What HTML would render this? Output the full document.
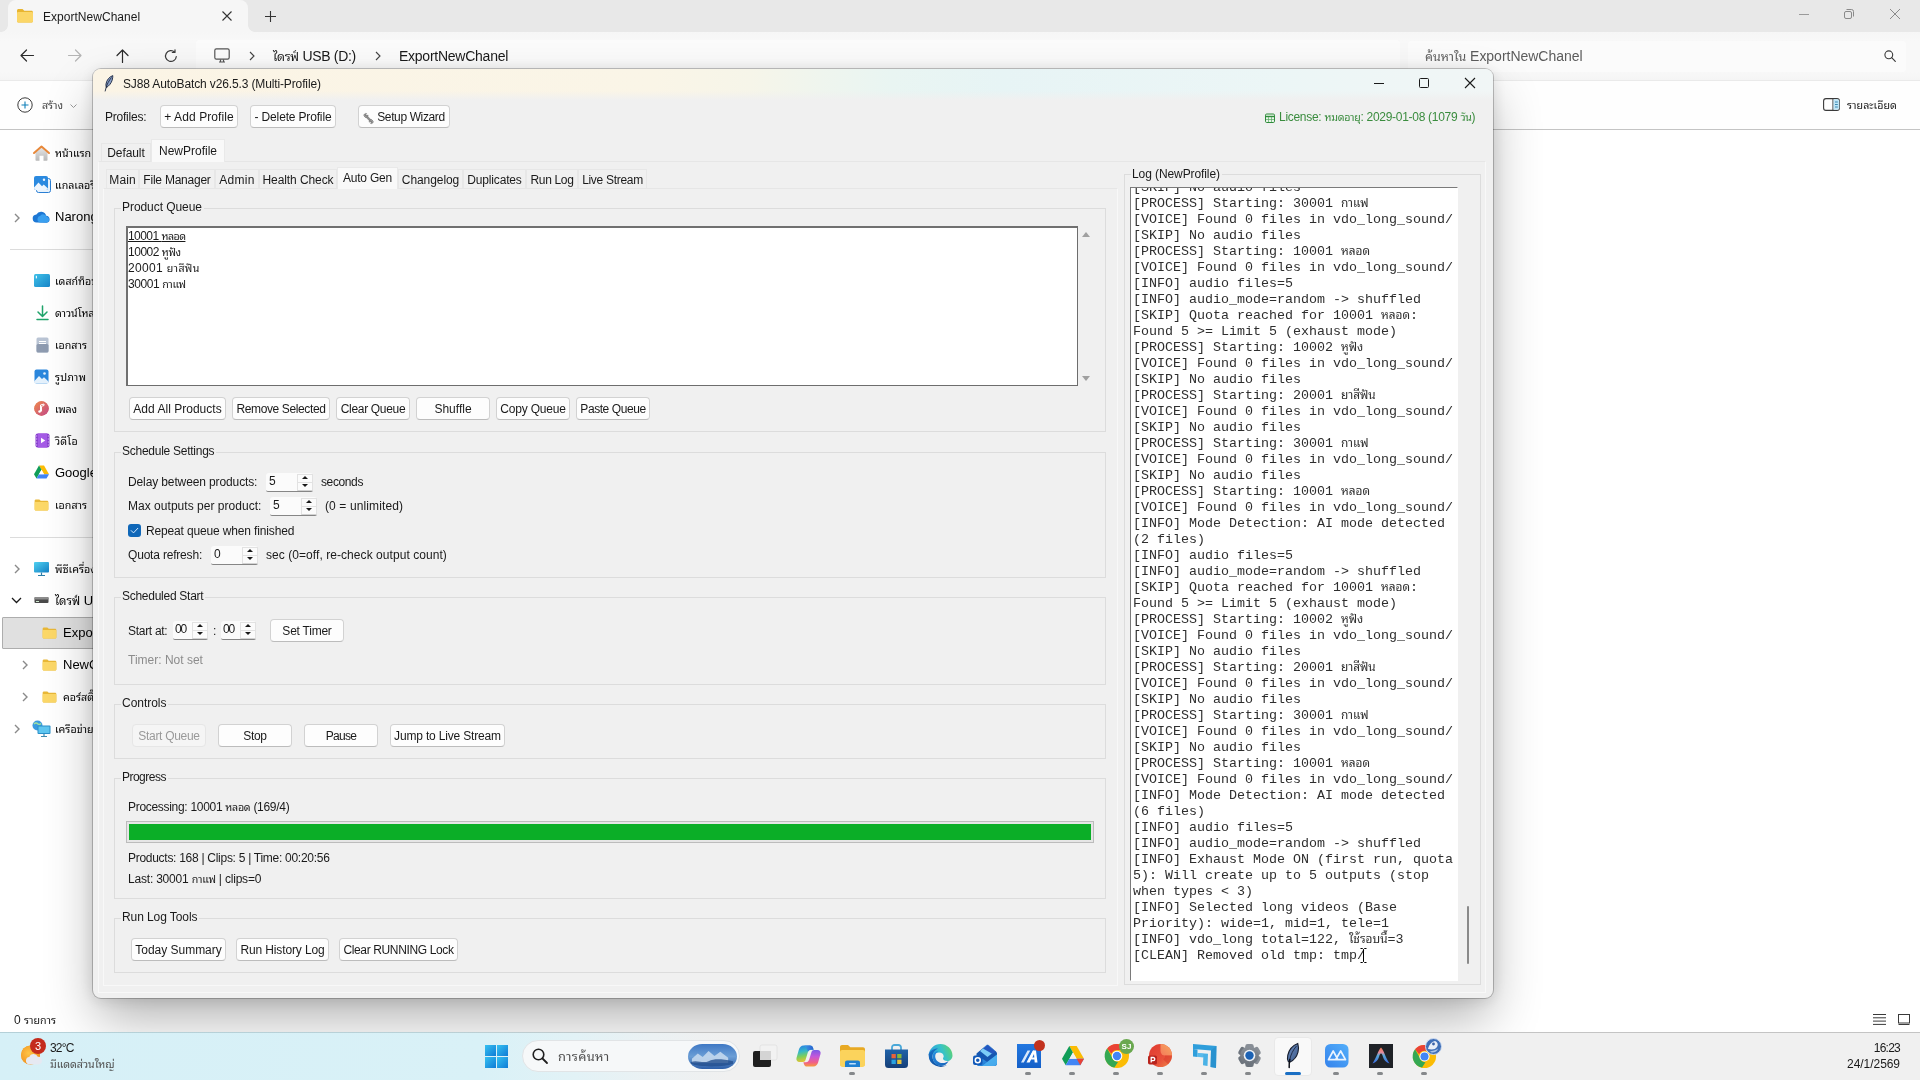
<!DOCTYPE html>
<html lang="th">
<head>
<meta charset="utf-8">
<title>ExportNewChanel</title>
<style>
*{box-sizing:border-box;margin:0;padding:0}
html,body{width:1920px;height:1080px;overflow:hidden;background:#fff}
body{position:relative;font-family:"Liberation Sans","Noto Sans Thai Looped","Loma","Noto Sans Thai",sans-serif;font-size:12px;color:#1a1a1a}
#root{position:absolute;left:0;top:0;width:1920px;height:1080px;overflow:hidden;will-change:transform}
.abs{position:absolute}
.t{position:absolute;white-space:nowrap;line-height:16px;height:16px}
svg{position:absolute;overflow:visible}
.th{font-size:.89em}
/* explorer */
#ex-title{position:absolute;left:0;top:0;width:1920px;height:32px;background:#e8e8e8}
#ex-tab{position:absolute;left:8px;top:0;width:240px;height:32px;background:#f6f6f6;border-radius:8px 8px 0 0}
#ex-tab:before{content:"";position:absolute;left:-7px;bottom:0;width:7px;height:7px;background:radial-gradient(circle at 0 0,rgba(246,246,246,0) 6.500px,#f6f6f6 7.200px)}
#ex-tab:after{content:"";position:absolute;right:-7px;bottom:0;width:7px;height:7px;background:radial-gradient(circle at 100% 0,rgba(246,246,246,0) 6.500px,#f6f6f6 7.200px)}
#ex-nav{position:absolute;left:0;top:32px;width:1920px;height:48px;background:linear-gradient(#f6f6f6 0,#f8f8f8 9px,#f8f8f8 40px,#f5f5f5 48px)}
#ex-addr{position:absolute;left:196px;top:40px;width:1204px;height:32px;background:#fbfbfb;border-radius:4px}
#ex-tool{position:absolute;left:0;top:80px;width:1920px;height:50px;background:#fefefe;border-top:1px solid #eaeaea;border-bottom:1px solid #c4c4c4}
#ex-search{position:absolute;left:1408px;top:41px;width:498px;height:31px;background:#fbfbfb;border-radius:4px}
.side{position:absolute;font-size:12px;line-height:16px;white-space:nowrap;color:#000}
/* app */
#app{position:absolute;left:93px;top:69px;width:1400px;height:929px;background:#f0f0f0;border-radius:8px;box-shadow:0 0 0 1px rgba(0,0,0,.22),0 24px 52px -4px rgba(0,0,0,.31),0 2px 16px rgba(0,0,0,.12);overflow:hidden}
#app .in{position:absolute;left:-93px;top:-68px;width:1920px;height:1080px}
#app-title{position:absolute;left:93px;top:69px;width:1400px;height:31px;background:linear-gradient(180deg,rgba(240,240,240,0) 0,rgba(240,240,240,0) 22px,rgba(240,240,240,.55) 27px,#f0f0f0 31px),linear-gradient(90deg,#fbf4e5 0%,#faf5e7 40%,#f6f5e9 47%,#eff5ee 52%,#e9f5f2 57%,#e7f4f5 65%,#ecf6f6 85%,#f1f6f6 100%)}
.btn{position:absolute;height:23px;background:#fdfdfd;border:1px solid #d2d2d2;border-bottom-color:#bcbcbc;border-radius:4px;text-align:center;line-height:22px;white-space:nowrap;font-size:12px;color:#1a1a1a}
.btn.dis{background:#f5f5f5;border-color:#e6e6e6;color:#9a9a9a}
.grp{position:absolute;border:1px solid #dcdcdc}
.grp>b{position:absolute;left:6px;top:-10px;font-weight:normal;background:#f0f0f0;padding:0 2px 0 1px;line-height:16px;height:16px;white-space:nowrap}
.tab{position:absolute;border:1px solid #e7e7e7;border-bottom:none;background:#f0f0f0;text-align:center;white-space:nowrap}
.tab.on{background:#f9f9f9;border-color:#e9e9e9}
.spin{position:absolute;height:19px;background:#fbfbfb;border-bottom:1px solid #868686;border-radius:3px 3px 2px 2px}
.spin i{position:absolute;left:3px;top:0;font-style:normal;line-height:17px}
.spin u{position:absolute;right:2px;top:1px;width:14px;height:16px;text-decoration:none}
.spin u:before{content:"";position:absolute;left:0;top:0;width:14px;height:7px;border:1px solid #e2e2e2;border-bottom-color:#d2d2d2}
.spin u:after{content:"";position:absolute;left:0;top:8px;width:14px;height:7px;border:1px solid #e2e2e2;border-bottom-color:#d2d2d2}
.spin s{position:absolute;right:5px;width:0;height:0;border:3px solid transparent}
.spin s.up{top:1px;border-top:none;border-bottom:3.500px solid #1a1a1a;top:3px}
.spin s.dn{border-bottom:none;border-top:3.500px solid #1a1a1a;top:11px}
#log{position:absolute;left:1130px;top:187px;width:328px;height:794px;background:#fff;border:1px solid #7a7a7a;border-right-color:#fff;border-bottom-color:#fff;overflow:hidden}
#log pre{position:absolute;left:2px;top:-8px;font-family:"Liberation Mono","Noto Sans Thai Looped","Loma","Noto Sans Thai",monospace;font-size:13.333px;line-height:16px;color:#2e2e2e;white-space:pre}
/* taskbar */
#tb{position:absolute;left:0;top:1032px;width:1920px;height:48px;background:linear-gradient(90deg,#d6f0f7 0%,#d9f1f7 25%,#e2f2f6 30%,#ebf1f3 34%,#f0f0f0 38%,#f0f0f0 100%);border-top:1px solid #c4c4c4}
#tbl{position:absolute;left:0;top:1032px;width:700px;height:1px;background:linear-gradient(90deg,#b4d0d8 0%,#b9d1d7 60%,#c4c4c4 100%)}
</style>
</head>
<body>
<div id="root">
<!-- ===== File Explorer window (background) ===== -->
<div id="explorer">
<div id="ex-title"></div>
<div id="ex-tab"></div>
<svg style="left:16px;top:8px" width="18" height="16" viewBox="0 0 18 16"><path d="M1 2.5c0-.8.7-1.5 1.500-1.500h4l1.800 1.800h7.200c.8 0 1.500.7 1.500 1.500v8.700c0 .8-.7 1.500-1.500 1.500h-13c-.8 0-1.500-.7-1.500-1.500z" fill="#e8b530"/><path d="M1 5.200c0-.7.600-1.200 1.300-1.200h13.400c.7 0 1.300.5 1.300 1.200v7.800c0 .8-.7 1.500-1.500 1.500h-13c-.8 0-1.500-.7-1.500-1.500z" fill="#fbd667"/></svg>
<div class="t" style="letter-spacing:0.03px;left:43px;top:9px;font-size:12px;color:#1a1a1a">ExportNewChanel</div>
<svg style="left:222px;top:11px" width="10" height="10" viewBox="0 0 10 10"><path d="M.5.5l9 9M9.500.5l-9 9" stroke="#333" stroke-width="1.100" fill="none"/></svg>
<svg style="left:265px;top:11px" width="11" height="11" viewBox="0 0 11 11"><path d="M5.500 0v11M0 5.500h11" stroke="#333" stroke-width="1.100" fill="none"/></svg>
<!-- window controls -->
<svg style="left:1799px;top:14px" width="10" height="1" viewBox="0 0 10 1"><path d="M0 .5h10" stroke="#9a9a9a" stroke-width="1"/></svg>
<svg style="left:1844px;top:9px" width="10" height="10" viewBox="0 0 10 10"><rect x=".5" y="2.500" width="7" height="7" rx="1.500" fill="none" stroke="#8a8a8a"/><path d="M2.500 .5h5a2 2 0 0 1 2 2v5" fill="none" stroke="#8a8a8a"/></svg>
<svg style="left:1890px;top:9px" width="10" height="10" viewBox="0 0 10 10"><path d="M0 0l10 10M10 0l-10 10" stroke="#8a8a8a" stroke-width="1" fill="none"/></svg>

<div id="ex-nav"></div>
<div id="ex-addr"></div>
<!-- nav arrows -->
<svg style="left:20px;top:49px" width="14" height="13" viewBox="0 0 14 13"><path d="M13.500 6.500h-12.500M6.500 1l-5.500 5.500l5.500 5.500" stroke="#2b2b2b" stroke-width="1.200" fill="none" stroke-linecap="round" stroke-linejoin="round"/></svg>
<svg style="left:68px;top:49px" width="14" height="13" viewBox="0 0 14 13"><path d="M.5 6.500h12.500M7.500 1l5.500 5.500l-5.500 5.500" stroke="#b4b4b4" stroke-width="1.200" fill="none" stroke-linecap="round" stroke-linejoin="round"/></svg>
<svg style="left:116px;top:49px" width="13" height="14" viewBox="0 0 13 14"><path d="M6.500 13.500v-12.500M1 6.500l5.500-5.500l5.500 5.500" stroke="#2b2b2b" stroke-width="1.200" fill="none" stroke-linecap="round" stroke-linejoin="round"/></svg>
<svg style="left:164px;top:49px" width="14" height="14" viewBox="0 0 14 14"><path d="M12.300 7.500a5.400 5.400 0 1 1-1.700-4.400M11 .8v2.700h-2.700" stroke="#3a3a3a" stroke-width="1.200" fill="none" stroke-linecap="round" stroke-linejoin="round"/></svg>
<svg style="left:214px;top:48px" width="16" height="15" viewBox="0 0 16 15"><rect x=".8" y=".8" width="14.400" height="10.400" rx="1.600" fill="none" stroke="#555" stroke-width="1.200"/><path d="M5 14h6M6.500 11.500v2.300M9.500 11.500v2.300" stroke="#555" stroke-width="1.200" fill="none"/></svg>
<svg style="left:249px;top:51px" width="6" height="10" viewBox="0 0 6 10"><path d="M1 1l4 4l-4 4" stroke="#444" stroke-width="1.100" fill="none"/></svg>
<div class="t" style="letter-spacing:-0.30px;left:273px;top:46px;font-size:14px;line-height:20px;height:20px;color:#1a1a1a"><span class="th">ไดรฟ์</span> USB (D:)</div>
<svg style="left:375px;top:51px" width="6" height="10" viewBox="0 0 6 10"><path d="M1 1l4 4l-4 4" stroke="#444" stroke-width="1.100" fill="none"/></svg>
<div class="t" style="letter-spacing:-0.25px;left:399px;top:46px;font-size:14px;line-height:20px;height:20px;color:#1a1a1a">ExportNewChanel</div>
<div id="ex-search"></div>
<div class="t" style="letter-spacing:-0.02px;left:1425px;top:46px;font-size:14px;line-height:20px;height:20px;color:#5c5c5c"><span class="th">ค้นหาใน</span> ExportNewChanel</div>
<svg style="left:1884px;top:50px" width="12" height="12" viewBox="0 0 12 12"><circle cx="4.800" cy="4.800" r="3.900" fill="none" stroke="#3a3a3a" stroke-width="1.100"/><path d="M7.700 7.700l3.600 3.600" stroke="#3a3a3a" stroke-width="1.200" stroke-linecap="round"/></svg>

<div id="ex-tool"></div>
<svg style="left:17px;top:97px" width="16" height="16" viewBox="0 0 16 16"><circle cx="8" cy="8" r="7.200" fill="none" stroke="#3c3c3c" stroke-width="1"/><path d="M8 4.500v7M4.500 8h7" stroke="#0f7fb8" stroke-width="1.100"/></svg>
<div class="t" style="letter-spacing:-0.05px;left:42px;top:97px;font-size:12px;color:#4a4a4a"><span class="th">สร้าง</span></div>
<svg style="left:70px;top:104px" width="7" height="4" viewBox="0 0 7 4"><path d="M.5.5l3 3l3-3" stroke="#9a9a9a" stroke-width="1" fill="none"/></svg>
<svg style="left:1823px;top:98px" width="17" height="13" viewBox="0 0 17 13"><rect x=".6" y=".6" width="15.800" height="11.800" rx="2.400" fill="none" stroke="#3a3a3a" stroke-width="1.100"/><path d="M10 .6v11.800" stroke="#3a3a3a" stroke-width="1.100"/><path d="M10.500 1.200h4a1.800 1.800 0 0 1 1.800 1.800v7a1.800 1.800 0 0 1-1.800 1.800h-4z" fill="#bfe6f7"/><path d="M12 4h2.800M12 6.500h2.800M12 9h2.800" stroke="#2a7ea8" stroke-width=".9"/></svg>
<div class="t" style="letter-spacing:0.04px;left:1847px;top:97px;font-size:12px;color:#1a1a1a"><span class="th">รายละเอียด</span></div>

<!-- sidebar -->
<div class="abs" style="left:10px;top:249px;width:90px;height:1px;background:#dcdcdc"></div>
<div class="abs" style="left:10px;top:537px;width:90px;height:1px;background:#dcdcdc"></div>
<div class="abs" style="left:2px;top:617px;width:100px;height:32px;background:#e0e0e0;border:1px solid #adadad;border-radius:1px"></div>

<!-- home -->
<svg style="left:33px;top:145px" width="17" height="16" viewBox="0 0 17 16"><defs><linearGradient id="hb" x1="0" y1="0" x2="0" y2="1"><stop offset="0" stop-color="#e6e6e6"/><stop offset="1" stop-color="#b8b8b8"/></linearGradient></defs><path d="M2.500 7.500l6-5l6 5v7.500a.8.800 0 0 1-.8.800h-3.200v-5h-4v5h-3.200a.8.800 0 0 1-.8-.8z" fill="url(#hb)"/><path d="M1 8l7.500-6.500l7.500 6.500" stroke="#e8883a" stroke-width="2" fill="none" stroke-linecap="round" stroke-linejoin="round"/></svg>
<div class="side" style="letter-spacing:-0.05px;left:55px;top:145px"><span class="th">หน้าแรก</span></div>
<!-- gallery -->
<svg style="left:34px;top:176px" width="17" height="17" viewBox="0 0 17 17"><rect x="2.500" y="2.500" width="14" height="14" rx="2" fill="#e8f3fd" stroke="#2a7fd4" stroke-width="1"/><rect x="0" y="0" width="14" height="14" rx="2" fill="#2b8ae0"/><path d="M0 11.500l4.500-5l3.500 3.700l1.700-1.600l4.300 4v0a2 2 0 0 1-2 1.400h-10a2 2 0 0 1-2-2z" fill="#eef6fe"/><circle cx="10" cy="3.800" r="1.200" fill="#eef6fe"/></svg>
<div class="side" style="left:55px;top:177px"><span class="th">แกลเลอรี</span></div>
<!-- onedrive -->
<svg style="left:14px;top:213px" width="6" height="10" viewBox="0 0 6 10"><path d="M1 1l4 4l-4 4" stroke="#8a8a8a" stroke-width="1.400" fill="none"/></svg>
<svg style="left:32px;top:210px" width="19" height="13" viewBox="0 0 19 13"><path d="M5 12.500a4 4 0 0 1-.6-8a5.300 5.300 0 0 1 9.800 1.200a3.600 3.600 0 0 1 .6 7.100z" fill="#1d77d4"/><path d="M8 12.500a3.500 3.500 0 0 1 .3-6.800a4 4 0 0 1 6.600 1a3 3 0 0 1 .1 5.800z" fill="#3aa0f0"/></svg>
<div class="side" style="left:55px;top:209px;font-size:13px">Narong</div>
<!-- desktop -->
<svg style="left:34px;top:274px" width="16" height="13" viewBox="0 0 16 13"><defs><linearGradient id="dk" x1="0" y1="0" x2="1" y2="1"><stop offset="0" stop-color="#3fc0e8"/><stop offset="1" stop-color="#1786c9"/></linearGradient></defs><rect x="0" y="0" width="16" height="13" rx="1.500" fill="url(#dk)"/><rect x="1.800" y="1.800" width="1.200" height="2.600" fill="#e8f8ff"/></svg>
<div class="side" style="left:55px;top:273px"><span class="th">เดสก์ท็อป</span></div>
<!-- download -->
<svg style="left:35px;top:305px" width="15" height="16" viewBox="0 0 15 16"><path d="M7.500 1v10M3 7l4.500 4.500l4.500-4.500M2 14.500h11" stroke="#1fa36a" stroke-width="1.500" fill="none" stroke-linecap="round" stroke-linejoin="round"/></svg>
<div class="side" style="left:55px;top:305px"><span class="th">ดาวน์โหลด</span></div>
<!-- documents -->
<svg style="left:36px;top:337px" width="13" height="16" viewBox="0 0 13 16"><rect x=".5" y=".5" width="12" height="15" rx="1.500" fill="#b9c4d4"/><rect x=".5" y="7" width="12" height="8.500" rx="1.500" fill="#8e9bb0"/><path d="M3 4.500h7M3 6.500h7" stroke="#fff" stroke-width="1"/></svg>
<div class="side" style="letter-spacing:-0.01px;left:55px;top:337px"><span class="th">เอกสาร</span></div>
<!-- pictures -->
<svg style="left:34px;top:369px" width="15" height="15" viewBox="0 0 15 15"><rect x=".5" y=".5" width="14" height="14" rx="2" fill="#2a86dc"/><path d="M.5 12l4.500-5l3 3l2-1.800l4.500 4.300v0a2 2 0 0 1-2 2h-10.500a2 2 0 0 1-2-2z" fill="#e4f1fc"/><circle cx="10.500" cy="4.500" r="1.300" fill="#e4f1fc"/></svg>
<div class="side" style="letter-spacing:0.10px;left:55px;top:369px"><span class="th">รูปภาพ</span></div>
<!-- music -->
<svg style="left:34px;top:401px" width="15" height="15" viewBox="0 0 15 15"><circle cx="7.500" cy="7.500" r="7.200" fill="#d9674f"/><circle cx="7.500" cy="7.500" r="7.200" fill="url(#mg)"/><path d="M6.500 10.500v-6.500l3.500-1v1.500l-2.500.8v5.200" stroke="#fff" stroke-width="1" fill="none"/><circle cx="5.600" cy="10.500" r="1.300" fill="#fff"/><defs><linearGradient id="mg" x1="0" y1="0" x2="1" y2="1"><stop offset="0" stop-color="#f08a4a"/><stop offset="1" stop-color="#c2478a"/></linearGradient></defs></svg>
<div class="side" style="letter-spacing:-0.18px;left:55px;top:401px"><span class="th">เพลง</span></div>
<!-- video -->
<svg style="left:35px;top:433px" width="15" height="15" viewBox="0 0 15 15"><rect x=".5" y=".5" width="14" height="14" rx="2" fill="#8a3fd0"/><rect x="3" y=".5" width="9" height="14" fill="#a55be6"/><path d="M6 4.800v5.400l4.300-2.700z" fill="#fff"/><path d="M1.200 3h1M1.200 6h1M1.200 9h1M1.200 12h1M12.800 3h1M12.800 6h1M12.800 9h1M12.800 12h1" stroke="#e9d6fb" stroke-width="1"/></svg>
<div class="side" style="letter-spacing:0.17px;left:55px;top:433px"><span class="th">วิดีโอ</span></div>
<!-- google drive -->
<svg style="left:34px;top:465px" width="15" height="14" viewBox="0 0 15 14"><path d="M5 .5h5l5 8.700h-5z" fill="#fbbc04"/><path d="M5 .5l-5 8.700l2.500 4.300l5-8.700z" fill="#0f9d58"/><path d="M2.500 13.500l2.500-4.300h10l-2.500 4.300z" fill="#4285f4"/><path d="M5 9.200l2.500-4.400l2.500 4.400z" fill="#fff"/></svg>
<div class="side" style="left:55px;top:465px;font-size:13px">Google</div>
<!-- folder -->
<svg style="left:34px;top:499px" width="15" height="12" viewBox="0 0 17 14"><path d="M.5 2c0-.8.700-1.500 1.500-1.500h4l1.600 1.600h7.400c.8 0 1.500.7 1.500 1.500v8.400c0 .8-.7 1.500-1.500 1.500h-13c-.8 0-1.500-.7-1.500-1.500z" fill="#e9b837"/><path d="M.5 4.700c0-.7.600-1.200 1.300-1.200h13.400c.7 0 1.300.5 1.300 1.200v7.300c0 .8-.7 1.500-1.500 1.500h-13c-.8 0-1.500-.7-1.500-1.500z" fill="#fcd868"/></svg>
<div class="side" style="left:55px;top:497px"><span class="th">เอกสาร</span></div>
<!-- this PC -->
<svg style="left:14px;top:564px" width="6" height="10" viewBox="0 0 6 10"><path d="M1 1l4 4l-4 4" stroke="#8a8a8a" stroke-width="1.400" fill="none"/></svg>
<svg style="left:34px;top:562px" width="15" height="14" viewBox="0 0 15 14"><defs><linearGradient id="pcg" x1="0" y1="0" x2="1" y2="1"><stop offset="0" stop-color="#4fd0f0"/><stop offset="1" stop-color="#1480c4"/></linearGradient></defs><rect x="0" y="0" width="15" height="10.500" rx="1" fill="url(#pcg)"/><path d="M7.500 10.500v2.500M4 13.500h7" stroke="#2d7ea8" stroke-width="1.200"/></svg>
<div class="side" style="left:55px;top:561px"><span class="th">พีซีเครื่องนี้</span></div>
<!-- USB drive -->
<svg style="left:11px;top:597px" width="11" height="7" viewBox="0 0 11 7"><path d="M1 1l4.500 4.500l4.500-4.500" stroke="#1a1a1a" stroke-width="1.300" fill="none"/></svg>
<svg style="left:34px;top:596px" width="15" height="8" viewBox="0 0 15 8"><rect x=".5" y="1" width="14" height="6" rx="1" fill="#4a4a4a"/><rect x=".5" y="1" width="14" height="2.500" rx="1" fill="#8c8c8c"/><rect x="2" y="5" width="3" height="1" fill="#cfe9cf"/></svg>
<div class="side" style="left:55px;top:593px;font-size:13px"><span class="th">ไดรฟ์</span> USB (D:)</div>
<!-- Export (selected) -->
<svg style="left:42px;top:627px" width="15" height="12" viewBox="0 0 17 14"><path d="M.5 2c0-.8.700-1.500 1.500-1.500h4l1.600 1.600h7.400c.8 0 1.500.7 1.500 1.500v8.400c0 .8-.7 1.500-1.500 1.500h-13c-.8 0-1.500-.7-1.500-1.500z" fill="#e9b837"/><path d="M.5 4.700c0-.7.600-1.200 1.300-1.200h13.400c.7 0 1.300.5 1.300 1.200v7.300c0 .8-.7 1.500-1.500 1.500h-13c-.8 0-1.500-.7-1.500-1.500z" fill="#fcd868"/></svg>
<div class="side" style="left:63px;top:625px;font-size:13px">ExportNewChanel</div>
<!-- NewC -->
<svg style="left:22px;top:660px" width="6" height="10" viewBox="0 0 6 10"><path d="M1 1l4 4l-4 4" stroke="#8a8a8a" stroke-width="1.400" fill="none"/></svg>
<svg style="left:42px;top:659px" width="15" height="12" viewBox="0 0 17 14"><path d="M.5 2c0-.8.700-1.500 1.500-1.500h4l1.600 1.600h7.400c.8 0 1.500.7 1.500 1.500v8.400c0 .8-.7 1.500-1.500 1.500h-13c-.8 0-1.500-.7-1.500-1.500z" fill="#e9b837"/><path d="M.5 4.700c0-.7.600-1.200 1.300-1.200h13.400c.7 0 1.300.5 1.300 1.200v7.300c0 .8-.7 1.500-1.500 1.500h-13c-.8 0-1.500-.7-1.500-1.500z" fill="#fcd868"/></svg>
<div class="side" style="left:63px;top:657px;font-size:13px">NewChanel</div>
<!-- course -->
<svg style="left:22px;top:692px" width="6" height="10" viewBox="0 0 6 10"><path d="M1 1l4 4l-4 4" stroke="#8a8a8a" stroke-width="1.400" fill="none"/></svg>
<svg style="left:42px;top:691px" width="15" height="12" viewBox="0 0 17 14"><path d="M.5 2c0-.8.700-1.500 1.500-1.500h4l1.600 1.600h7.400c.8 0 1.500.7 1.500 1.500v8.400c0 .8-.7 1.500-1.500 1.500h-13c-.8 0-1.500-.7-1.500-1.500z" fill="#e9b837"/><path d="M.5 4.700c0-.7.600-1.200 1.300-1.200h13.400c.7 0 1.300.5 1.300 1.200v7.300c0 .8-.7 1.500-1.500 1.500h-13c-.8 0-1.500-.7-1.500-1.500z" fill="#fcd868"/></svg>
<div class="side" style="left:63px;top:689px"><span class="th">คอร์สติ๊กต็อก</span></div>
<!-- network -->
<svg style="left:14px;top:724px" width="6" height="10" viewBox="0 0 6 10"><path d="M1 1l4 4l-4 4" stroke="#8a8a8a" stroke-width="1.400" fill="none"/></svg>
<svg style="left:32px;top:720px" width="19" height="17" viewBox="0 0 19 17"><circle cx="5.500" cy="5.500" r="5" fill="#3b9be0"/><path d="M2 4c1.500-1.500 3-1 4 0s2 .5 3-.5" stroke="#9fe0a0" stroke-width="1.500" fill="none"/><rect x="5.500" y="5.500" width="13" height="8.500" rx="1" fill="#2a8fc9"/><rect x="6.500" y="6.500" width="11" height="6.500" fill="#5ec6f0"/><path d="M9 16.500h6M12 14v2.500" stroke="#3f8ab0" stroke-width="1.200"/></svg>
<div class="side" style="left:55px;top:721px"><span class="th">เครือข่าย</span></div>

<!-- status bar -->
<div class="t" style="letter-spacing:-0.01px;left:14px;top:1012px;font-size:12px;color:#1a1a1a">0 <span class="th">รายการ</span></div>
<svg style="left:1873px;top:1014px" width="13" height="11" viewBox="0 0 13 11"><path d="M0 .5h13M0 3.800h13M0 7.100h13M0 10.400h13" stroke="#3a3a3a" stroke-width="1"/></svg>
<svg style="left:1898px;top:1014px" width="12" height="11" viewBox="0 0 12 11"><rect x=".5" y=".5" width="11" height="8.500" fill="none" stroke="#3a3a3a" stroke-width="1"/><path d="M.5 10.500h11" stroke="#3a3a3a" stroke-width="1"/></svg>
</div>
<!-- ===== SJ88 AutoBatch window ===== -->
<div id="app"></div>
<div id="appc">
<div id="app-title" style="border-radius:8px 8px 0 0"></div>
<svg style="left:103px;top:75px" width="11" height="17" viewBox="0 0 11 17"><path d="M9.800 .6c-3.500 1.200-6.300 4.600-6.800 8.400c-.2 1.500.1 2.900.4 3.600c2.200-1.500 4.800-4 5.800-7.500c.4-1.600.7-3.300.6-4.500z" fill="#8aa0c8" stroke="#1c2740" stroke-width=".9"/><path d="M8.500 2.500c-2.500 3-4.500 6.500-5.500 10.500l-.9 3.400" stroke="#1c2740" stroke-width=".9" fill="none"/></svg>
<div class="t" style="letter-spacing:-0.13px;left:123px;top:76px;font-size:12px;color:#1a1a1a">SJ88 AutoBatch v26.5.3 (Multi-Profile)</div>
<svg style="left:1374px;top:83px" width="10" height="1" viewBox="0 0 10 1"><path d="M0 .5h10" stroke="#1a1a1a" stroke-width="1"/></svg>
<svg style="left:1419px;top:78px" width="10" height="10" viewBox="0 0 10 10"><rect x=".5" y=".5" width="9" height="9" rx="1" fill="none" stroke="#1a1a1a" stroke-width="1"/></svg>
<svg style="left:1465px;top:78px" width="10" height="10" viewBox="0 0 10 10"><path d="M0 0l10 10M10 0l-10 10" stroke="#1a1a1a" stroke-width="1.100" fill="none"/></svg>

<!-- profiles row -->
<div class="t" style="letter-spacing:-0.23px;left:105px;top:109px">Profiles:</div>
<div class="btn" style="letter-spacing:0.08px;left:160px;top:105px;width:78px">+ Add Profile</div>
<div class="btn" style="letter-spacing:-0.16px;left:250px;top:105px;width:86px">- Delete Profile</div>
<div class="btn" style="letter-spacing:-0.38px;left:358px;top:105px;width:92px;padding-left:14px">Setup Wizard</div>
<svg style="left:363px;top:113px" width="11" height="11" viewBox="0 0 11 11"><path d="M2.200 2.200l6.600 6.600" stroke="#8d8d8d" stroke-width="2.400" stroke-linecap="round"/><path d="M.9 2.800a2.100 2.100 0 0 1 2.700-2.300l-1.300 1.300l.3 1.100l1.100.3l1.300-1.300a2.100 2.100 0 0 1-2.700 2.500z" fill="#a5a5a5" stroke="#6f6f6f" stroke-width=".6"/><path d="M10.200 8.300a2 2 0 0 1-2.600 2.200l1.200-1.200l-.3-1l-1-.3l-1.200 1.200a2 2 0 0 1 2.500-2.500z" fill="#a5a5a5" stroke="#6f6f6f" stroke-width=".6"/></svg>
<svg style="left:1265px;top:113px" width="10" height="10" viewBox="0 0 10 10"><rect x=".5" y="1" width="9" height="8.500" rx="1.200" fill="#e8f5e8" stroke="#2e8b3a" stroke-width="1"/><path d="M.5 3.500h9" stroke="#2e8b3a" stroke-width="1.400"/><path d="M3.500 4v5M6.500 4v5M1 6.500h8" stroke="#5aa865" stroke-width=".7"/></svg>
<div class="t" style="letter-spacing:-0.29px;left:1279px;top:109px;color:#3a8c3e">License: <span class="th">หมดอายุ</span>: 2029-01-08 (1079 <span class="th">วัน</span>)</div>

<!-- outer notebook -->
<div class="abs" style="left:98px;top:161px;width:1388px;height:832px;border:1px solid #f8f8f8;border-top-color:#e6e6e6;background:#f0f0f0"></div>
<div class="tab" style="letter-spacing:-0.09px;left:101px;top:143px;width:50px;height:18px;line-height:18px;padding-top:0">Default</div>
<div class="tab on" style="letter-spacing:-0.00px;left:151px;top:139px;width:74px;height:23px;line-height:20px;padding-top:1px">NewProfile</div>

<!-- inner notebook -->
<div class="abs" style="left:103px;top:188px;width:1015px;height:798px;border:1px solid #f8f8f8;border-top-color:#e6e6e6;background:#f0f0f0"></div>
<div class="tab" style="letter-spacing:0.09px;left:106px;top:169px;width:33px;height:19px;line-height:20px">Main</div>
<div class="tab" style="letter-spacing:-0.23px;left:139px;top:169px;width:76px;height:19px;line-height:20px">File Manager</div>
<div class="tab" style="letter-spacing:0.32px;left:215px;top:169px;width:44px;height:19px;line-height:20px">Admin</div>
<div class="tab" style="letter-spacing:-0.08px;left:259px;top:169px;width:78px;height:19px;line-height:20px">Health Check</div>
<div class="tab on" style="letter-spacing:-0.21px;left:337px;top:167px;width:61px;height:22px;line-height:20px">Auto Gen</div>
<div class="tab" style="letter-spacing:-0.07px;left:398px;top:169px;width:65px;height:19px;line-height:20px">Changelog</div>
<div class="tab" style="letter-spacing:-0.17px;left:463px;top:169px;width:63px;height:19px;line-height:20px">Duplicates</div>
<div class="tab" style="letter-spacing:-0.35px;left:526px;top:169px;width:52px;height:19px;line-height:20px">Run Log</div>
<div class="tab" style="letter-spacing:-0.30px;left:578px;top:169px;width:69px;height:19px;line-height:20px">Live Stream</div>

<!-- Product Queue -->
<div class="grp" style="left:114px;top:208px;width:992px;height:224px"><b style="letter-spacing:-0.06px">Product Queue</b></div>
<div class="abs" style="left:126px;top:226px;width:952px;height:160px;background:#fff;border:1px solid #6d6d6d;border-top-width:2px;border-left-width:2px;border-top-color:#707070;border-left-color:#707070"></div>
<div class="t" style="letter-spacing:-0.55px;left:128px;top:228px;text-decoration:underline">10001 <span class="th">หลอด</span></div>
<div class="t" style="letter-spacing:-0.48px;left:128px;top:244px">10002 <span class="th">หูฟัง</span></div>
<div class="t" style="letter-spacing:0.33px;left:128px;top:260px">20001 <span class="th">ยาสีฟัน</span></div>
<div class="t" style="letter-spacing:-0.40px;left:128px;top:276px">30001 <span class="th">กาแฟ</span></div>
<svg style="left:1082px;top:232px" width="8" height="5" viewBox="0 0 8 5"><path d="M0 5l4-5l4 5z" fill="#a0a0a0"/></svg>
<svg style="left:1082px;top:376px" width="8" height="5" viewBox="0 0 8 5"><path d="M0 0l4 5l4-5z" fill="#a0a0a0"/></svg>
<div class="btn" style="letter-spacing:0.02px;left:129px;top:397px;width:97px">Add All Products</div>
<div class="btn" style="letter-spacing:-0.37px;left:232px;top:397px;width:98px">Remove Selected</div>
<div class="btn" style="letter-spacing:-0.32px;left:336px;top:397px;width:74px">Clear Queue</div>
<div class="btn" style="letter-spacing:0.01px;left:416px;top:397px;width:74px">Shuffle</div>
<div class="btn" style="letter-spacing:-0.18px;left:496px;top:397px;width:74px">Copy Queue</div>
<div class="btn" style="letter-spacing:-0.43px;left:576px;top:397px;width:74px">Paste Queue</div>

<!-- Schedule Settings -->
<div class="grp" style="left:114px;top:452px;width:992px;height:126px"><b style="letter-spacing:-0.26px">Schedule Settings</b></div>
<div class="t" style="letter-spacing:-0.12px;left:128px;top:474px">Delay between products:</div>
<div class="spin" style="left:266px;top:473px;width:47px"><i>5</i><u></u><s class="up"></s><s class="dn"></s></div>
<div class="t" style="letter-spacing:-0.38px;left:321px;top:474px">seconds</div>
<div class="t" style="letter-spacing:0.03px;left:128px;top:498px">Max outputs per product:</div>
<div class="spin" style="left:270px;top:497px;width:47px"><i>5</i><u></u><s class="up"></s><s class="dn"></s></div>
<div class="t" style="letter-spacing:0.12px;left:325px;top:498px">(0 = unlimited)</div>
<div class="abs" style="left:128px;top:524px;width:13px;height:13px;background:#0f67b8;border-radius:3px"></div>
<svg style="left:130px;top:527px" width="9" height="7" viewBox="0 0 9 7"><path d="M1.200 3.600l2.300 2.300l4.300-4.600" stroke="#d6eaff" stroke-width="1" fill="none" stroke-linecap="round" stroke-linejoin="round"/></svg>
<div class="t" style="letter-spacing:-0.15px;left:146px;top:523px">Repeat queue when finished</div>
<div class="t" style="letter-spacing:-0.19px;left:128px;top:547px">Quota refresh:</div>
<div class="spin" style="left:211px;top:546px;width:47px"><i>0</i><u></u><s class="up"></s><s class="dn"></s></div>
<div class="t" style="letter-spacing:0.06px;left:266px;top:547px">sec (0=off, re-check output count)</div>

<!-- Scheduled Start -->
<div class="grp" style="left:114px;top:597px;width:992px;height:88px"><b style="letter-spacing:-0.27px">Scheduled Start</b></div>
<div class="t" style="letter-spacing:-0.29px;left:128px;top:623px">Start at:</div>
<div class="spin" style="left:173px;top:621px;width:35px"><i style="letter-spacing:-1.20px;left:2px">00</i><u></u><s class="up"></s><s class="dn"></s></div>
<div class="t" style="left:213px;top:623px">:</div>
<div class="spin" style="left:221px;top:621px;width:35px"><i style="letter-spacing:-1.20px;left:2px">00</i><u></u><s class="up"></s><s class="dn"></s></div>
<div class="btn" style="letter-spacing:-0.23px;left:270px;top:619px;width:74px">Set Timer</div>
<div class="t" style="letter-spacing:-0.00px;left:128px;top:652px;color:#8c8c8c">Timer: Not set</div>

<!-- Controls -->
<div class="grp" style="left:114px;top:704px;width:992px;height:55px"><b style="letter-spacing:-0.04px">Controls</b></div>
<div class="btn dis" style="letter-spacing:-0.31px;left:132px;top:724px;width:74px">Start Queue</div>
<div class="btn" style="letter-spacing:-0.33px;left:218px;top:724px;width:74px">Stop</div>
<div class="btn" style="letter-spacing:-0.73px;left:304px;top:724px;width:74px">Pause</div>
<div class="btn" style="letter-spacing:-0.17px;left:390px;top:724px;width:115px">Jump to Live Stream</div>

<!-- Progress -->
<div class="grp" style="left:114px;top:778px;width:992px;height:121px"><b style="letter-spacing:-0.52px">Progress</b></div>
<div class="t" style="letter-spacing:-0.30px;left:128px;top:799px">Processing: 10001 <span class="th">หลอด</span> (169/4)</div>
<div class="abs" style="left:126px;top:821px;width:968px;height:22px;background:#e6e6e6;border:1px solid #bcbcbc"></div>
<div class="abs" style="left:129px;top:824px;width:962px;height:16px;background:#0bae27"></div>
<div class="t" style="letter-spacing:-0.28px;left:128px;top:850px">Products: 168 | Clips: 5 | Time: 00:20:56</div>
<div class="t" style="letter-spacing:-0.20px;left:128px;top:871px">Last: 30001 <span class="th">กาแฟ</span> | clips=0</div>

<!-- Run Log Tools -->
<div class="grp" style="left:114px;top:918px;width:992px;height:55px"><b style="letter-spacing:-0.08px">Run Log Tools</b></div>
<div class="btn" style="letter-spacing:-0.02px;left:131px;top:938px;width:95px">Today Summary</div>
<div class="btn" style="letter-spacing:-0.12px;left:236px;top:938px;width:93px">Run History Log</div>
<div class="btn" style="letter-spacing:-0.36px;left:339px;top:938px;width:119px">Clear RUNNING Lock</div>

<!-- Log panel -->
<div class="grp" style="left:1124px;top:174px;width:357px;height:811px"><b style="letter-spacing:-0.09px;top:-9px">Log (NewProfile)</b></div>
<div id="log"><pre>[SKIP] No audio files
[PROCESS] Starting: 30001 <span class="th">กาแฟ</span>
[VOICE] Found 0 files in vdo_long_sound/
[SKIP] No audio files
[PROCESS] Starting: 10001 <span class="th">หลอด</span>
[VOICE] Found 0 files in vdo_long_sound/
[INFO] audio files=5
[INFO] audio_mode=random -&gt; shuffled
[SKIP] Quota reached for 10001 <span class="th">หลอด</span>:
Found 5 &gt;= Limit 5 (exhaust mode)
[PROCESS] Starting: 10002 <span class="th">หูฟัง</span>
[VOICE] Found 0 files in vdo_long_sound/
[SKIP] No audio files
[PROCESS] Starting: 20001 <span class="th">ยาสีฟัน</span>
[VOICE] Found 0 files in vdo_long_sound/
[SKIP] No audio files
[PROCESS] Starting: 30001 <span class="th">กาแฟ</span>
[VOICE] Found 0 files in vdo_long_sound/
[SKIP] No audio files
[PROCESS] Starting: 10001 <span class="th">หลอด</span>
[VOICE] Found 0 files in vdo_long_sound/
[INFO] Mode Detection: AI mode detected
(2 files)
[INFO] audio files=5
[INFO] audio_mode=random -&gt; shuffled
[SKIP] Quota reached for 10001 <span class="th">หลอด</span>:
Found 5 &gt;= Limit 5 (exhaust mode)
[PROCESS] Starting: 10002 <span class="th">หูฟัง</span>
[VOICE] Found 0 files in vdo_long_sound/
[SKIP] No audio files
[PROCESS] Starting: 20001 <span class="th">ยาสีฟัน</span>
[VOICE] Found 0 files in vdo_long_sound/
[SKIP] No audio files
[PROCESS] Starting: 30001 <span class="th">กาแฟ</span>
[VOICE] Found 0 files in vdo_long_sound/
[SKIP] No audio files
[PROCESS] Starting: 10001 <span class="th">หลอด</span>
[VOICE] Found 0 files in vdo_long_sound/
[INFO] Mode Detection: AI mode detected
(6 files)
[INFO] audio files=5
[INFO] audio_mode=random -&gt; shuffled
[INFO] Exhaust Mode ON (first run, quota
5): Will create up to 5 outputs (stop
when types &lt; 3)
[INFO] Selected long videos (Base
Priority): wide=1, mid=1, tele=1
[INFO] vdo_long total=122, <span class="th">ใช้รอบนี้</span>=3
[CLEAN] Removed old tmp: tmp/</pre></div>
<div class="abs" style="left:1467px;top:906px;width:2px;height:58px;background:#8a8a8a;border-radius:1px"></div>
<!-- I-beam cursor -->
<svg style="left:1360px;top:948px" width="7" height="15" viewBox="0 0 7 15"><path d="M.5.5h2l1 1l1-1h2M3.500 1.500v12M.5 14.500h2l1-1l1 1h2" stroke="#000" stroke-width="1" fill="none"/></svg>
</div>
<!-- ===== Taskbar ===== -->
<div id="tb"></div><div id="tbl"></div>
<div id="tbc">
<!-- weather -->
<svg style="left:20px;top:1040px" width="26" height="26" viewBox="0 0 26 26"><circle cx="10.500" cy="15" r="9.500" fill="#f5a623"/><circle cx="10.500" cy="15" r="9.500" fill="url(#sg)"/><path d="M9 24.500a3.800 3.800 0 0 1 .3-7.500a4.600 4.600 0 0 1 8.500-.3a3.900 3.900 0 0 1 .5 7.800z" fill="#e6e9f2"/><defs><radialGradient id="sg" cx=".4" cy=".4" r=".7"><stop offset="0" stop-color="#ffc545"/><stop offset="1" stop-color="#ee8a1c"/></radialGradient></defs></svg>
<div class="abs" style="left:30px;top:1038px;width:16px;height:16px;border-radius:8px;background:#c42b1c;color:#fff;font-size:11px;line-height:16px;text-align:center">3</div>
<div class="t" style="letter-spacing:-0.80px;left:50px;top:1040px;font-size:12px;color:#1a1a1a">32°C</div>
<div class="t" style="letter-spacing:-0.05px;left:50px;top:1056px;font-size:12px;color:#505050"><span class="th">มีแดดส่วนใหญ่</span></div>
<!-- start -->
<svg style="left:485px;top:1045px" width="23" height="23" viewBox="0 0 23 23"><defs><linearGradient id="wg" x1="0" y1="0" x2="1" y2="1"><stop offset="0" stop-color="#35c1f1"/><stop offset="1" stop-color="#0f7bd6"/></linearGradient></defs><rect x="0" y="0" width="11" height="11" fill="url(#wg)"/><rect x="12" y="0" width="11" height="11" fill="url(#wg)"/><rect x="0" y="12" width="11" height="11" fill="url(#wg)"/><rect x="12" y="12" width="11" height="11" fill="url(#wg)"/></svg>
<!-- search pill -->
<div class="abs" style="left:522px;top:1040px;width:218px;height:32px;border-radius:16px;background:#f6f8f9;border:1px solid #e1e4e6"></div>
<svg style="left:532px;top:1048px" width="16" height="16" viewBox="0 0 16 16"><circle cx="6.500" cy="6.500" r="5.300" fill="none" stroke="#1f1f1f" stroke-width="1.600"/><path d="M10.500 10.500l4.500 4.500" stroke="#1f1f1f" stroke-width="1.800" stroke-linecap="round"/></svg>
<div class="t" style="letter-spacing:0.29px;left:558px;top:1048px;font-size:14.500px;line-height:17px;color:#4d4d4d"><span class="th">การค้นหา</span></div>
<svg style="left:688px;top:1044px" width="49" height="25" viewBox="0 0 50 29" preserveAspectRatio="none"><defs><linearGradient id="wi" x1="0" y1="0" x2="0" y2="1"><stop offset="0" stop-color="#3e78c4"/><stop offset=".5" stop-color="#6b9ed6"/><stop offset="1" stop-color="#2e5fa8"/></linearGradient></defs><rect x="0" y="0" width="50" height="29" rx="14.500" fill="url(#wi)"/><path d="M4 17l6-6l5 4l6-7l6 6l6-5l8 7v6h-37z" fill="#c9dcf0" opacity=".85"/><path d="M3 21c6-3 12 2 18-1s12-3 25 0v3c-8 4-36 4-43 0z" fill="#24508f" opacity=".8"/></svg>
<!-- task view -->
<svg style="left:753px;top:1045px" width="24" height="22" viewBox="0 0 24 22"><rect x="7" y="0" width="17" height="15" rx="2" fill="#f2f2f2" stroke="#dadada" stroke-width=".6"/><rect x="0" y="6" width="18" height="16" rx="2" fill="#1f1f1f"/><rect x="7" y="6" width="11" height="9" fill="#d4d4d4"/></svg>
<!-- copilot -->
<svg style="left:796px;top:1044px" width="25" height="24" viewBox="0 0 25 24"><defs><linearGradient id="cpl" x1=".3" y1="0" x2=".5" y2="1"><stop offset="0" stop-color="#2a86e0"/><stop offset=".35" stop-color="#35b8c8"/><stop offset=".65" stop-color="#7fcf5a"/><stop offset="1" stop-color="#f2c22e"/></linearGradient><linearGradient id="cpr" x1=".5" y1="0" x2=".5" y2="1"><stop offset="0" stop-color="#7a5ae8"/><stop offset=".4" stop-color="#c558d8"/><stop offset=".75" stop-color="#f0608a"/><stop offset="1" stop-color="#f79a3e"/></linearGradient><linearGradient id="cpt" x1="0" y1="0" x2="1" y2="0"><stop offset="0" stop-color="#3ea0e8"/><stop offset="1" stop-color="#2a5fd0"/></linearGradient></defs><path d="M7.500 1.500h6.500c1.600 0 2.500.8 3 2.300l.6 2h-2.600c-1.700 0-2.700 1-3.200 2.600l-2.300 7.600c-.4 1.300-1.200 2-2.500 2h-3.500c-2.300 0-3.600-1.800-3-4l2.400-8.500c.6-2.300 2.300-4 4.600-4z" fill="url(#cpl)"/><path d="M17.500 22.500h-6.500c-1.600 0-2.500-.8-3-2.300l-.6-2h2.600c1.700 0 2.700-1 3.200-2.600l2.300-7.600c.4-1.300 1.200-2 2.500-2h3.500c2.300 0 3.600 1.800 3 4l-2.400 8.500c-.6 2.300-2.300 4-4.600 4z" fill="url(#cpr)"/><path d="M7.500 1.500h6.500c1.600 0 2.500.8 3 2.300l.6 2h-2.600c-1.500 0-2.400.7-3 2l-1.500-3.300c-.5-1.400-1.300-2.400-2.500-3z" fill="url(#cpt)"/></svg>
<!-- explorer -->
<svg style="left:840px;top:1045px" width="25" height="22" viewBox="0 0 25 22"><path d="M0 2c0-1.100.900-2 2-2h6l2.300 2.300h12.700c1.100 0 2 .9 2 2v14.700c0 1.100-.9 2-2 2h-21c-1.100 0-2-.9-2-2z" fill="#e8a923"/><path d="M0 7c0-1.100.900-2 2-2h21c1.100 0 2 .9 2 2v12.500c0 1.400-1.100 2.500-2.500 2.500h-20c-1.400 0-2.500-1.100-2.500-2.500z" fill="#fbd35c"/><path d="M5 17.500c0-1.100.900-2 2-2h11c1.100 0 2 .9 2 2v4.500h-15z" fill="#1e7fd1"/><rect x="9" y="18" width="7" height="1.500" rx=".7" fill="#bfe0fb"/></svg>
<!-- store -->
<svg style="left:885px;top:1044px" width="23" height="24" viewBox="0 0 23 24"><defs><linearGradient id="stg" x1="0" y1="0" x2="0" y2="1"><stop offset="0" stop-color="#1f62a8"/><stop offset="1" stop-color="#153f78"/></linearGradient></defs><path d="M7 6.500v-3a2.500 2.500 0 0 1 2.500-2.500h4a2.500 2.500 0 0 1 2.500 2.500v3" fill="none" stroke="#4aa8d8" stroke-width="1.800"/><path d="M0 5.500h23v15a3.500 3.500 0 0 1-3.500 3.500h-16a3.500 3.500 0 0 1-3.500-3.500z" fill="url(#stg)"/><rect x="6.500" y="10" width="4.300" height="4.300" fill="#e8623a"/><rect x="12.200" y="10" width="4.300" height="4.300" fill="#86b83a"/><rect x="6.500" y="15.700" width="4.300" height="4.300" fill="#2aa2e0"/><rect x="12.200" y="15.700" width="4.300" height="4.300" fill="#e8c23a"/></svg>
<!-- edge -->
<svg style="left:928px;top:1044px" width="25" height="24" viewBox="0 0 25 24"><defs><linearGradient id="eg1" x1="0" y1="0" x2=".6" y2="1"><stop offset="0" stop-color="#1b74c9"/><stop offset="1" stop-color="#0f4fa0"/></linearGradient><linearGradient id="eg2" x1="0" y1=".5" x2="1" y2=".2"><stop offset="0" stop-color="#2f9fe0"/><stop offset=".55" stop-color="#37c2c9"/><stop offset="1" stop-color="#62d468"/></linearGradient><linearGradient id="eg3" x1="0" y1="0" x2="1" y2="1"><stop offset="0" stop-color="#2a8fe0"/><stop offset="1" stop-color="#1661b8"/></linearGradient></defs><path d="M12.500 0a12 12 0 0 1 12 11.500c0 3.500-2.500 5.500-5.300 5.500c-2.400 0-4.200-1-4.200-2.400c0-.8.700-1.200.7-2.400c0-2-2-3.700-4.700-3.700c-4 0-7.500 3.200-10.400 2.500a12 12 0 0 1 11.900-11z" fill="url(#eg2)"/><path d="M.6 11c.8-4 5-6.500 9.400-6.500c-3.500 1.500-5.500 4.500-5.500 8c0 5 4 9.500 9.500 9.500c2.500 0 4.800-.8 6.700-2.300a12 12 0 0 1-20.100-8.700z" fill="url(#eg1)"/><path d="M4.500 12.500c0-3.300 2.800-5.300 6-5.300c-2.200 1-3.300 3-3.300 5c0 3.700 3 6.800 7.300 6.800c2.300 0 4.500-.8 6.200-2.300c-1.500 3.300-4.500 5.300-8 5.300c-4.500 0-8.200-4.200-8.200-9.500z" fill="url(#eg3)"/></svg>
<!-- outlook -->
<svg style="left:972px;top:1044px" width="25" height="24" viewBox="0 0 25 24"><defs><linearGradient id="ol1" x1="0" y1="0" x2="1" y2="1"><stop offset="0" stop-color="#3aa8f0"/><stop offset="1" stop-color="#1a66c8"/></linearGradient></defs><path d="M4.500 9.500l9.800-8.300c.7-.6 1.700-.6 2.400 0l7.300 6.300c.6.500 1 1.200 1 2v9.500a3 3 0 0 1-3 3h-14.500a3 3 0 0 1-3-3z" fill="#1657b0"/><path d="M8 7l6.800-5.700c.5-.4 1.200-.4 1.700 0l6.500 5.700l-7.500 6z" fill="#7ccdf8"/><path d="M11 4.500l4-3.300c.4-.3.900-.3 1.300 0l7.200 6.300l-3 2.500z" fill="#2458c0"/><path d="M4.500 11l10.800 7l9.700-7.500v8.500a3 3 0 0 1-3 3h-14.500a3 3 0 0 1-3-3z" fill="url(#ol1)"/><path d="M10 22l15-11.500v8.500a3 3 0 0 1-3 3z" fill="#56bdf5" opacity=".75"/><rect x="1" y="11.500" width="9.500" height="9.500" rx="2" fill="#1259b8"/><circle cx="5.750" cy="16.250" r="2.500" fill="none" stroke="#fff" stroke-width="1.500"/></svg>
<!-- MA app -->
<svg style="left:1017px;top:1043px" width="25" height="25" viewBox="0 0 25 25"><defs><linearGradient id="mag" x1="0" y1="0" x2="0" y2="1"><stop offset="0" stop-color="#2277e0"/><stop offset="1" stop-color="#1560c8"/></linearGradient></defs><rect x="0" y="1" width="24" height="24" fill="url(#mag)"/><path d="M4 19.500l6.500-12h2.800l-6.500 12zM9.500 19.500l6.500-12h1.500" fill="#d8e8fb"/><path d="M9.500 19.500l6.500-12h3l1.500 12h-2.800l-.3-3h-3.300l-1.500 3zM15.300 14.500h2l-.3-3.500z" fill="#fff"/></svg>
<div class="abs" style="left:1034px;top:1040px;width:11px;height:11px;border-radius:6px;background:#c2321e"></div>
<!-- drive -->
<svg style="left:1062px;top:1046px" width="22" height="19.500" viewBox="0 0 25 22"><path d="M8.300 0h8.400l8.300 14.400h-8.400z" fill="#fbbc04"/><path d="M8.300 0l-8.300 14.400l4.200 7.300l8.300-14.400z" fill="#0f9d58"/><path d="M4.200 21.700l4.200-7.300h16.600l-4.200 7.300z" fill="#4285f4"/><path d="M8.400 14.400l4.100-7.100l4.100 7.100z" fill="#f0f0f0"/><path d="M16.600 14.400h8.400l-4.200 7.300z" fill="#ea4335"/><path d="M8.300 0h4.200l4.200 7.300l-4.200 0z" fill="#1e8e3e" opacity=".0"/></svg>
<!-- chrome SJ -->
<svg style="left:1105px;top:1043px" width="25" height="25" viewBox="0 0 25 25"><circle cx="12" cy="13" r="12" fill="#fbbc05"/><path d="M12 1a12 12 0 0 1 10.400 6h-10.400a6 6 0 0 0-5.600 3.800l-4.300-5.300a12 12 0 0 1 9.900-4.500z" fill="#ea4335"/><path d="M2.100 5.500l5.200 9a6 6 0 0 0 5.700 4.400l-3.600 5.700a12 12 0 0 1-7.300-19.100z" fill="#34a853"/><circle cx="12" cy="13" r="5.300" fill="#fff"/><circle cx="12" cy="13" r="4.200" fill="#4285f4"/></svg>
<div class="abs" style="left:1119px;top:1039px;width:15px;height:15px;border-radius:8px;background:#6aa84f;color:#fff;font-size:8px;line-height:15px;text-align:center;font-weight:bold">SJ</div>
<!-- ppt-like red -->
<svg style="left:1148px;top:1044px" width="24" height="24" viewBox="0 0 24 24"><defs><linearGradient id="ppg" x1="0" y1="0" x2="1" y2="1"><stop offset="0" stop-color="#e03a30"/><stop offset=".6" stop-color="#e8503a"/><stop offset="1" stop-color="#f08a4a"/></linearGradient><linearGradient id="ppg2" x1="0" y1="1" x2="1" y2="0"><stop offset="0" stop-color="#f47a5a"/><stop offset="1" stop-color="#f6a860"/></linearGradient></defs><circle cx="12.500" cy="11.500" r="11.500" fill="url(#ppg)"/><path d="M12.500 0a11.500 11.500 0 0 1 11.500 11.500h-7a4.500 4.500 0 0 1-4.500-4.500z" fill="url(#ppg2)"/><path d="M24 11.500a11.500 11.500 0 0 1-4 8.700l-5-5.200c1.500-.5 2.500-2 2-3.500z" fill="#d8382c" opacity=".55"/><rect x="0" y="11.500" width="9" height="9" rx="1.800" fill="#b8231c"/><path d="M3.200 18.500v-5h2a1.600 1.600 0 0 1 0 3.200h-2" fill="none" stroke="#fff" stroke-width="1.300"/></svg>
<!-- blue square logo -->
<svg style="left:1193px;top:1044px" width="24" height="24" viewBox="0 0 24 24"><path d="M0 0l23.500 2l-.5 22l-5.500-1l.5-16.500l-18-1.500z" fill="#2f9edb"/><path d="M0 5l4.500.4v7.600l-4.500-.6z" fill="#2f9edb"/><path d="M4.500 9l10.500.8l-.5 12.200l-4.500-.8l.3-8l-5.800-.4z" fill="#4ab2e6"/><path d="M4.500 9v4l5.800.4v-4z" fill="#63c0ee" opacity=".6"/><path d="M18 6.500l-.5 16.500l5.500 1l.5-22z" fill="#2589c4" opacity=".55"/></svg>
<!-- settings -->
<svg style="left:1237px;top:1044px" width="25" height="23" viewBox="0 0 25 23"><defs><linearGradient id="grg" x1="0" y1="0" x2="0" y2="1"><stop offset="0" stop-color="#8a9098"/><stop offset="1" stop-color="#6b727b"/></linearGradient></defs><g transform="translate(12.500 11.500)" fill="url(#grg)"><rect x="-4.200" y="-11.500" width="8.400" height="23" rx="2.200"/><rect x="-4.200" y="-11.500" width="8.400" height="23" rx="2.200" transform="rotate(60)"/><rect x="-4.200" y="-11.500" width="8.400" height="23" rx="2.200" transform="rotate(120)"/><circle r="9.300"/></g><circle cx="12.500" cy="11.500" r="5.800" fill="#eef2f6"/><circle cx="12.500" cy="11.500" r="4.200" fill="#1c62b4"/></svg>
<!-- feather (active) -->
<div class="abs" style="left:1274px;top:1037px;width:38px;height:39px;border-radius:4px;background:#f9f9f9;border:1px solid #e9e9e9"></div>
<svg style="left:1286px;top:1043px" width="14" height="25" viewBox="0 0 14 25"><defs><linearGradient id="fth" x1="0" y1="0" x2="1" y2="1"><stop offset="0" stop-color="#6a8cc0"/><stop offset="1" stop-color="#3d5a8a"/></linearGradient></defs><path d="M11.800 .6c-4.500 1.800-8.800 6.200-10 11.500c-.6 2.600-.3 5 .5 6.400l1.700.6c3.500-1.800 6.800-5.400 8-10c.7-2.800.6-6-.2-8.500z" fill="url(#fth)" stroke="#151c2c" stroke-width="1.100"/><path d="M10.500 3c-3.300 3.800-5.800 8.500-6.800 14" stroke="#1b2540" stroke-width=".9" fill="none"/><path d="M3.800 16.500c-.5 2.500-.7 5.300-.6 8" stroke="#0c0f18" stroke-width="1.500" fill="none" stroke-linecap="round"/></svg>
<div class="abs" style="left:1285px;top:1072px;width:16px;height:3px;border-radius:2px;background:#1a6fc4"></div>
<!-- AA app -->
<svg style="left:1325px;top:1044px" width="24" height="24" viewBox="0 0 24 24"><defs><linearGradient id="aag" x1="0" y1="1" x2="1" y2="0"><stop offset="0" stop-color="#3583ec"/><stop offset="1" stop-color="#52aefa"/></linearGradient></defs><rect x="0" y="0" width="23.500" height="23.500" rx="5.500" fill="url(#aag)"/><path d="M3.500 15.700l4.700-8.700l4.700 8.700zM10.600 15.700l5.100-8.700l4.800 8.700z" fill="none" stroke="#eaf4ff" stroke-width="1.700" stroke-linejoin="round"/></svg>
<!-- black A app -->
<svg style="left:1369px;top:1044px" width="24" height="24" viewBox="0 0 24 24"><defs><linearGradient id="ag" x1="0" y1="0" x2="0" y2="1"><stop offset="0" stop-color="#ee7a52"/><stop offset=".3" stop-color="#e88a9a"/><stop offset=".5" stop-color="#5aa8d8"/><stop offset="1" stop-color="#3a68e0"/></linearGradient></defs><rect x="0" y="0" width="24" height="24" fill="#1f2227"/><path d="M12 3.500c3 3 4 9 8.500 16c-3.500-.8-5.500-3.500-6.500-6.500c-.6-2-1.200-3.500-2-3.500s-1.400 1.500-2 3.500c-1 3-3 5.700-6.500 6.500c4.500-7 5.500-13 8.500-16z" fill="url(#ag)"/></svg>
<!-- chrome 2 -->
<svg style="left:1413px;top:1044px" width="24" height="24" viewBox="0 0 25 25"><circle cx="12" cy="13" r="12" fill="#fbbc05"/><path d="M12 1a12 12 0 0 1 10.400 6h-10.400a6 6 0 0 0-5.600 3.800l-4.300-5.300a12 12 0 0 1 9.900-4.500z" fill="#ea4335"/><path d="M2.100 5.500l5.200 9a6 6 0 0 0 5.700 4.400l-3.600 5.700a12 12 0 0 1-7.300-19.100z" fill="#34a853"/><circle cx="12" cy="13" r="5.300" fill="#fff"/><circle cx="12" cy="13" r="4.200" fill="#4285f4"/></svg>
<div class="abs" style="left:1425px;top:1038px;width:17px;height:17px;border-radius:9px;background:#3f6fb8;border:1px solid #cfdcf0"></div>
<svg style="left:1427px;top:1040px" width="13" height="13" viewBox="0 0 13 13"><path d="M1 9c1-4 3-7 7-8c2.500 1 3.500 3.500 2 6c-1.500 2.500-5 3-9 2z" fill="#e8eef8"/><path d="M3 11.500c2-1 6-1 8-3c-.5 2.500-3 4-5.500 4c-1 0-2-.3-2.500-1z" fill="#a9c4ea"/><circle cx="6.500" cy="4" r="1.400" fill="#3a62a8"/></svg>
<!-- running indicators -->
<div class="abs" style="left:849px;top:1072px;width:6px;height:3px;border-radius:2px;background:#85888b"></div>
<div class="abs" style="left:1025px;top:1072px;width:6px;height:3px;border-radius:2px;background:#85888b"></div>
<div class="abs" style="left:1069px;top:1072px;width:6px;height:3px;border-radius:2px;background:#85888b"></div>
<div class="abs" style="left:1113px;top:1072px;width:6px;height:3px;border-radius:2px;background:#85888b"></div>
<div class="abs" style="left:1157px;top:1072px;width:6px;height:3px;border-radius:2px;background:#85888b"></div>
<div class="abs" style="left:1201px;top:1072px;width:6px;height:3px;border-radius:2px;background:#85888b"></div>
<div class="abs" style="left:1245px;top:1072px;width:6px;height:3px;border-radius:2px;background:#85888b"></div>
<div class="abs" style="left:1333px;top:1072px;width:6px;height:3px;border-radius:2px;background:#85888b"></div>
<div class="abs" style="left:1377px;top:1072px;width:6px;height:3px;border-radius:2px;background:#85888b"></div>
<div class="abs" style="left:1421px;top:1072px;width:6px;height:3px;border-radius:2px;background:#85888b"></div>
<!-- clock -->
<div class="t" style="letter-spacing:-0.76px;left:1800px;width:100px;top:1040px;text-align:right;font-size:12px;color:#1a1a1a">16:23</div>
<div class="t" style="letter-spacing:-0.05px;left:1800px;width:100px;top:1056px;text-align:right;font-size:12px;color:#1a1a1a">24/1/2569</div>
</div>
</div>
</body>
</html>
